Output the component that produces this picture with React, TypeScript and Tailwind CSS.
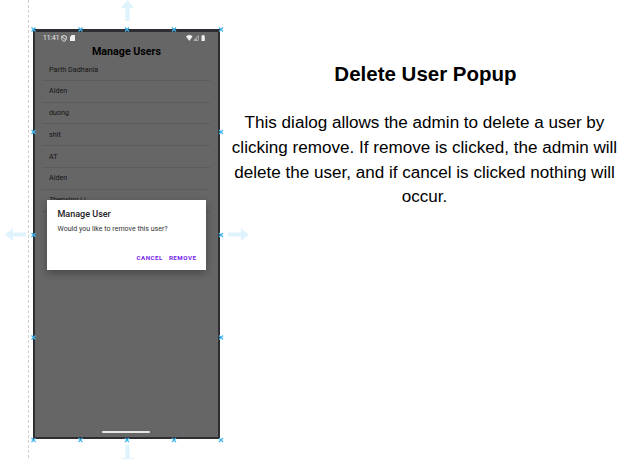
const users = ["Parth Dadhania", "Aiden", "duong", "shit", "AT", "Aiden", "Zhenxing Li"];

const handles: [number, number][] = [
  [33.5, 29.5], [80.5, 29.5], [127, 29.5], [174, 29.5], [221, 29.5],
  [33.5, 132], [221, 132],
  [33.5, 235], [221, 235],
  [33.5, 337.5], [221, 337.5],
  [33.5, 440], [80.5, 440], [127, 440], [174, 440], [221, 440],
];

function StatusBar() {
  return (
    <div className="flex h-[10px] items-center pl-[8px] pr-[12px] pt-[2px] text-[#eeeeee]">
      <span className="w-[18px] text-[6.6px] leading-none">11:41</span>
      <svg className="h-[7px] w-[6px]" viewBox="0 0 6 7" fill="none" stroke="currentColor" strokeWidth="0.9">
        <path d="M3 .6 5.3 1.4V3.4C5.3 5 4.2 6 3 6.4 1.8 6 .7 5 .7 3.4V1.4ZM1 1.6 4.8 5" />
      </svg>
      <svg className="ml-[3px] h-[6px] w-[5px]" viewBox="0 0 5 6" fill="currentColor">
        <path d="M1.7 0H5V6H0V1.8Z" />
      </svg>
      <div className="flex-1" />
      <svg className="h-[6px] w-[20px]" viewBox="0 0 20 6" fill="currentColor">
        <path d="M0 1.5Q3.3-1.3 6.6 1.5L3.3 6Z" />
        <path d="M12.3 .7V5.4H7.8Z" fill="none" stroke="#bbbbbb" strokeWidth="0.8" />
        <path d="M10.6 3V5.4H8Z" fill="#bbbbbb" />
        <path d="M15.5 .7H16.3V0H18V.7H18.8V6H15.5Z" />
      </svg>
    </div>
  );
}

function Arrow({ className }: { className: string }) {
  return (
    <svg className={`absolute h-[21px] w-[13px] ${className}`} viewBox="0 0 13 21" fill="#dff3fd">
      <path d="M6.5 0 13 8H8.6V21H4.4V8H0Z" />
    </svg>
  );
}

export default function App() {
  return (
    <div className="relative flex h-[459px] w-[639px] overflow-hidden bg-white font-['Liberation_Sans',Arial,sans-serif] text-black">
      <svg className="h-full w-[33px] shrink-0" viewBox="0 0 33 459">
        <path d="M28.5 0V459" stroke="#cfcfcf" strokeDasharray="3 2" />
      </svg>

      <div className="relative mt-[29px] h-[410px] w-[187px] shrink-0 border-x-[2px] border-b-[2px] border-t-[3px] border-[#2e2e32] bg-[#666666] font-['Roboto',sans-serif]">
        <StatusBar />
        <h1 className="mt-[3px] text-center text-[10.7px] font-bold leading-[14px] text-black">Manage Users</h1>
        <ul className="ml-[7px] w-[168px] text-[7.2px] text-[#151515]">
          {users.map((name, i) => (
            <li key={i} className="flex h-[21.8px] items-center border-b border-[#5c5c5c] pl-[7px] pt-px">
              {name}
            </li>
          ))}
        </ul>
        <div className="absolute left-[12px] top-[168px] flex h-[70px] w-[158.5px] flex-col bg-white px-[10.5px] pt-[9px] shadow-[0_3px_8px_rgba(0,0,0,0.3)]">
          <h2 className="whitespace-nowrap text-[9px] font-medium leading-[11px] text-[#202020]">Manage User</h2>
          <p className="mt-[3px] whitespace-nowrap text-[7.05px] leading-[11px] text-[#333333]">Would you like to remove this user?</p>
          <div className="mt-[19px] flex justify-end gap-[6px] text-[6.2px] font-bold leading-[10px] tracking-[0.5px] text-[#7423ed]">
            <span>CANCEL</span>
            <span className="-mr-[1.5px]">REMOVE</span>
          </div>
        </div>
        <div className="absolute left-[67px] top-[399px] h-[2px] w-[48px] rounded-full bg-[#e6e6e6]" />
      </div>

      <section className="ml-[5px] flex w-[399px] flex-col pt-[61px] text-center">
        <h2 className="pl-[2px] text-[20.5px] font-bold leading-[26px]">Delete User Popup</h2>
        <p className="mt-[24px] whitespace-nowrap text-[17.08px] leading-[24.8px]">
          This dialog allows the admin to delete a user by<br />
          clicking remove. If remove is clicked, the admin will<br />
          delete the user, and if cancel is clicked nothing will<br />
          occur.
        </p>
      </section>

      <Arrow className="left-[120.5px] top-0" />
      <Arrow className="left-[120.5px] top-[445px] rotate-180" />
      <Arrow className="left-[9px] top-[223.5px] -rotate-90" />
      <Arrow className="left-[231.5px] top-[223.5px] rotate-90" />
      <svg className="absolute inset-0 h-full w-full" viewBox="0 0 639 459" fill="none" stroke="#3fb4ec" strokeWidth="1.2">
        {handles.map(([x, y], i) => (
          <path key={i} d={`M${x - 2} ${y - 2}l4 4m0-4l-4 4`} />
        ))}
      </svg>
    </div>
  );
}
